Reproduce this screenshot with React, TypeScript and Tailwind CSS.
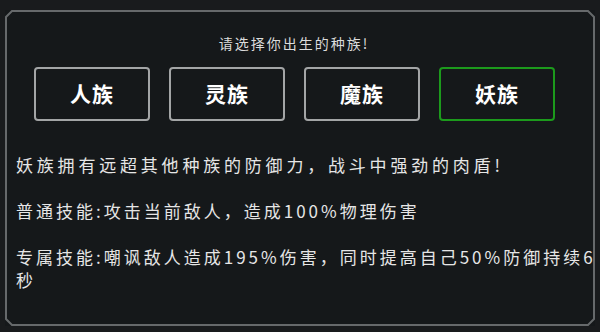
import React from 'react';

const races = ['人族', '灵族', '魔族', '妖族'];

export default function App() {
  const selected = '妖族';
  const font = { fontFamily: '"Noto Sans CJK SC", "Noto Sans", sans-serif' };

  return (
    <div className="w-[600px] h-[332px] overflow-hidden bg-[#191b1d] pt-[10px] px-[5px]" style={font}>
      <div className="relative flex flex-col h-[316px] bg-[#15181a] pt-[24px] pl-[11px]">
        {/* frame with chamfered corners */}
        <svg className="absolute inset-0 pointer-events-none" width="590" height="316" viewBox="0 0 590 316">
          <path
            d="M7 1 H583 L589 7 V309 L583 315 H7 L1 309 V7 Z"
            fill="none"
            stroke="#66696b"
            strokeWidth="2"
          />
        </svg>

        <div className="h-[18px] leading-[18px] text-center text-[14px] tracking-[2px] text-[#dcdcdc] pr-[23px]">
          请选择你出生的种族!
        </div>

        <div className="flex gap-[19px] mt-[15px] ml-[18px]">
          {races.map((r) => (
            <div
              key={r}
              className={
                r === selected
                  ? 'w-[116px] h-[54px] flex items-center justify-center rounded-[4px] border-2 border-[#1c9a1c] text-white text-[21px] font-bold tracking-[1px]'
                  : 'w-[116px] h-[54px] flex items-center justify-center rounded-[4px] border-2 border-[#a3a5a6] text-white text-[21px] font-bold tracking-[1px]'
              }
            >
              {r}
            </div>
          ))}
        </div>

        <div className="mt-[32px] text-[17px] leading-[23px] tracking-[3px] text-[#e6e6e6] whitespace-nowrap">
          <p className="tracking-[3.8px]">妖族拥有远超其他种族的防御力，战斗中强劲的肉盾!</p>
          <p className="mt-[23px]">普通技能:攻击当前敌人，造成100%物理伤害</p>
          <p className="mt-[23px]">
            专属技能:嘲讽敌人造成195%伤害，同时提高自己50%防御持续6
            <br />
            秒
          </p>
        </div>
      </div>
    </div>
  );
}
